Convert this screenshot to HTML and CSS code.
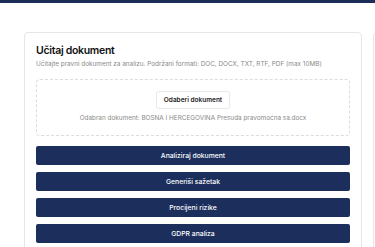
FILE: index.html
```html
<!DOCTYPE html>
<html lang="bs">
<head>
  <meta charset="UTF-8" />
  <title>Učitaj dokument</title>
  <link rel="stylesheet" href="styles.css">
</head>
<body>

  <!-- gornja traka -->
  <div class="top-bar"></div>

  <div class="page">
    <!-- kartica za upload -->
    <div class="card">
      <h2 class="card-title">Učitaj dokument</h2>
      <p class="card-sub">Učitajte pravni dokument za analizu. Podržani formati: DOC, DOCX, TXT, RTF, PDF (max 10MB)</p>

      <div class="drop-zone">
        <button class="pick-btn">Odaberi dokument</button>
        <div class="picked">Odabran dokument: BOSNA I HERCEGOVINA Presuda pravomoćna sa.docx</div>
      </div>

      <div class="actions">
        <button class="action">Analiziraj dokument</button>
        <button class="action">Generiši sažetak</button>
        <button class="action">Procijeni rizike</button>
        <button class="action">GDPR analiza</button>
      </div>
    </div>

    <!-- desna kartica (rezultati) -->
    <div class="card card-side"></div>
  </div>

</body>
</html>
```

FILE: styles.css
```css
body {
  margin: 0;
  font-family: Inter, 'Noto Sans', sans-serif;
  background: #fff;
  color: #111;
  overflow: hidden;
}

.top-bar {
  height: 3px;
  background: #1b2d58;
}

.page {
  display: flex;
  gap: 11px;
  padding: 29px 0 0 24px;
}

.card {
  flex: 0 0 338px;
  box-sizing: border-box;
  border: 1px solid #e6e6e6;
  border-radius: 4px;
  padding: 10px 11px 12px;
  background: #fff;
}

.card-side {
  height: 240px;
}

.card-title {
  margin: 0;
  font-size: 10.5px;
  font-weight: 600;
  letter-spacing: -0.3px;
  line-height: 16px;
}

.card-sub {
  margin: 0;
  font-size: 6.4px;
  color: #8a8a8a;
  line-height: 10px;
  white-space: nowrap;
}

.drop-zone {
  margin-top: 10px;
  border: 1px dashed #dcdcdc;
  border-radius: 4px;
  padding: 11px 0 12px;
  display: flex;
  flex-direction: column;
  align-items: center;
  gap: 4px;
}

.pick-btn {
  font-family: inherit;
  font-size: 6.5px;
  font-weight: 600;
  color: #222;
  background: #fff;
  border: 1px solid #e8e8e8;
  border-radius: 3px;
  height: 18px;
  width: 74px;
  padding: 0;
}

.picked {
  font-size: 6.4px;
  color: #8a8a8a;
  line-height: 10px;
}

.actions {
  margin-top: 10px;
  display: flex;
  flex-direction: column;
  gap: 7px;
}

.action {
  font-family: inherit;
  height: 19px;
  border: none;
  border-radius: 2px;
  background: #1b2e5c;
  color: #fff;
  font-size: 6.8px;
  font-weight: 500;
}
```
